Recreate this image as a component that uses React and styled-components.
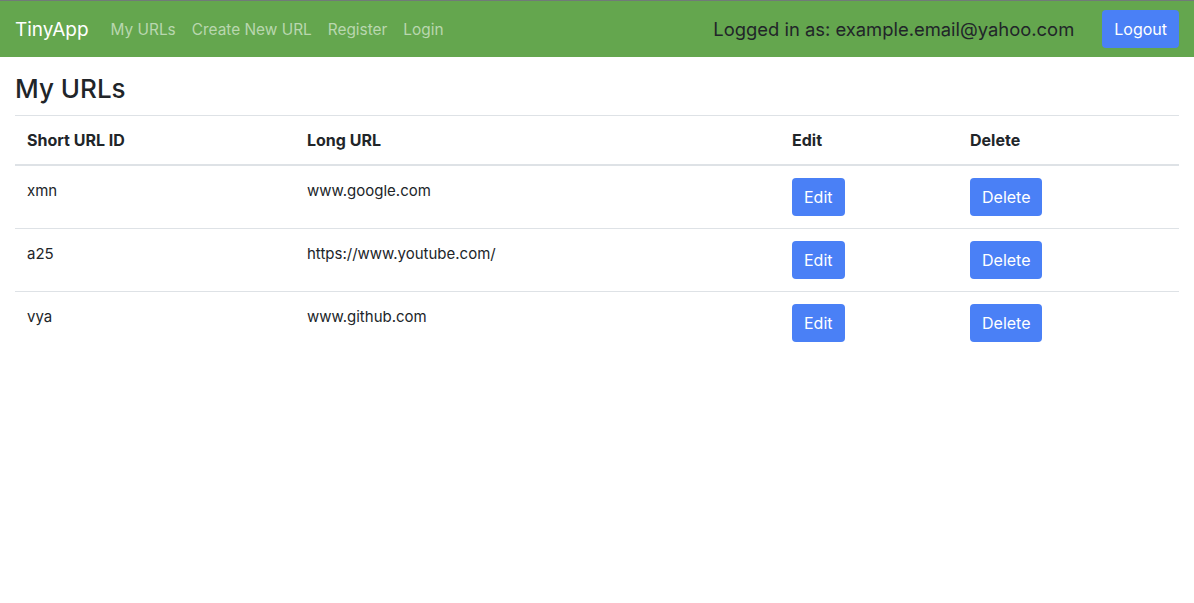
import React from "react";
import styled, { createGlobalStyle } from "styled-components";

const GlobalStyle = createGlobalStyle`
  body {
    margin: 0;
    font-family: Inter, "Liberation Sans", Arial, sans-serif;
    color: #212529;
    background: #fff;
  }
`;

const Navbar = styled.nav`
  display: flex;
  align-items: center;
  height: 56px;
  padding: 0 15px;
  background: #64a64e;
  border-top: 1px solid #717a78;
`;

const Brand = styled.a`
  font-size: 19px;
  color: #fff;
  margin-right: 22px;
  text-decoration: none;
`;

const NavLink = styled.a`
  font-size: 15.4px;
  color: #b9d7af;
  margin-right: 16px;
  text-decoration: none;
`;

const Spacer = styled.div`
  flex: 1;
`;

const UserText = styled.span`
  font-size: 18.4px;
  color: #212529;
  margin-right: 28px;
`;

const Button = styled.button`
  font-family: inherit;
  font-size: 16px;
  line-height: 24px;
  padding: 7px 12px;
  border: none;
  border-radius: 4px;
  background: #4a80f6;
  color: #fff;
  cursor: pointer;
`;

const Main = styled.main`
  padding: 0 15px;
`;

const Title = styled.h1`
  font-size: 26px;
  font-weight: 500;
  margin: 16px 0 10px;
  line-height: 32px;
`;

const Table = styled.table`
  width: 100%;
  table-layout: fixed;
  border-collapse: collapse;
  font-size: 15px;
`;

const Th = styled.th`
  box-sizing: border-box;
  text-align: left;
  font-weight: 700;
  font-size: 16px;
  padding: 12px;
  line-height: 24px;
  border-top: 1px solid #dee2e6;
  border-bottom: 2px solid #dee2e6;
  width: ${(p) => (p.$w ? `${p.$w}px` : "auto")};
`;

const Td = styled.td`
  padding: 13px 12px 11px;
  line-height: 24px;
  vertical-align: top;
  border-top: 1px solid #dee2e6;
`;

const ButtonCell = styled(Td)`
  padding: 12px;
`;

const urls = [
  { id: "xmn", long: "www.google.com" },
  { id: "a25", long: "https://www.youtube.com/" },
  { id: "vya", long: "www.github.com" },
];

export default function App() {
  return (
    <>
      <GlobalStyle />
      <Navbar>
        <Brand href="#">TinyApp</Brand>
        <NavLink href="#">My URLs</NavLink>
        <NavLink href="#">Create New URL</NavLink>
        <NavLink href="#">Register</NavLink>
        <NavLink href="#">Login</NavLink>
        <Spacer />
        <UserText>Logged in as: example.email@yahoo.com</UserText>
        <Button>Logout</Button>
      </Navbar>
      <Main>
        <Title>My URLs</Title>
        <Table>
          <thead>
            <tr>
              <Th $w={280}>Short URL ID</Th>
              <Th $w={485}>Long URL</Th>
              <Th $w={178}>Edit</Th>
              <Th>Delete</Th>
            </tr>
          </thead>
          <tbody>
            {urls.map((u) => (
              <tr key={u.id}>
                <Td>{u.id}</Td>
                <Td>{u.long}</Td>
                <ButtonCell>
                  <Button>Edit</Button>
                </ButtonCell>
                <ButtonCell>
                  <Button>Delete</Button>
                </ButtonCell>
              </tr>
            ))}
          </tbody>
        </Table>
      </Main>
    </>
  );
}
